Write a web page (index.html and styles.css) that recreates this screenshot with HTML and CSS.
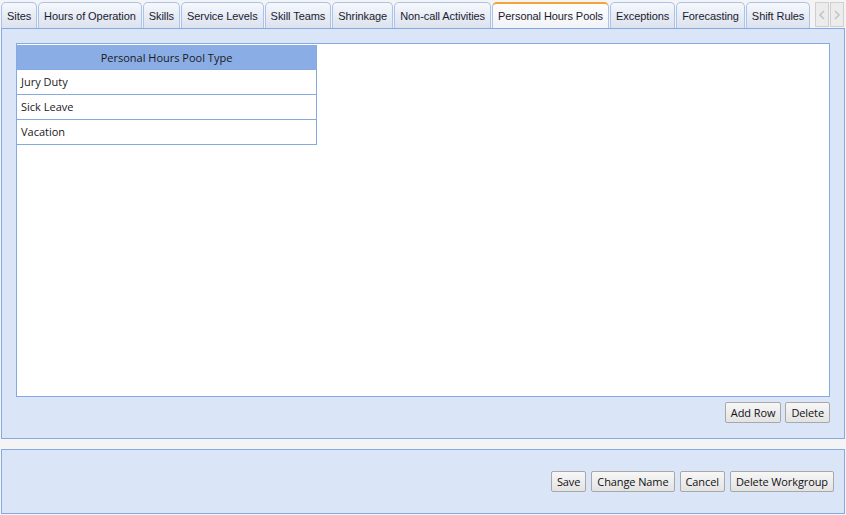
FILE: index.html
```html
<!DOCTYPE html>
<html lang="en">
<head>
  <meta charset="UTF-8" />
  <title>Workgroup Settings</title>
  <link rel="stylesheet" href="styles.css">
</head>
<body>

<div class="tab-strip">
  <div class="tabs">
    <div class="tab">Sites</div>
    <div class="tab">Hours of Operation</div>
    <div class="tab">Skills</div>
    <div class="tab">Service Levels</div>
    <div class="tab">Skill Teams</div>
    <div class="tab">Shrinkage</div>
    <div class="tab">Non-call Activities</div>
    <div class="tab active">Personal Hours Pools</div>
    <div class="tab">Exceptions</div>
    <div class="tab">Forecasting</div>
    <div class="tab">Shift Rules</div>
  </div>
  <div class="scroll-btns">
    <div class="scroll-btn">
      <svg width="8" height="10" viewBox="0 0 8 10"><path d="M6 1 L2 5 L6 9" fill="none" stroke="#c4c4c4" stroke-width="1.6"/></svg>
    </div>
    <div class="scroll-btn">
      <svg width="8" height="10" viewBox="0 0 8 10"><path d="M2 1 L6 5 L2 9" fill="none" stroke="#c4c4c4" stroke-width="1.6"/></svg>
    </div>
  </div>
</div>

<div class="panel tab-panel">
  <div class="grid-box">
    <table class="grid">
      <thead>
        <tr><th>Personal Hours Pool Type</th></tr>
      </thead>
      <tbody>
        <tr><td>Jury Duty</td></tr>
        <tr><td>Sick Leave</td></tr>
        <tr><td>Vacation</td></tr>
      </tbody>
    </table>
  </div>
  <div class="actions">
    <button class="btn">Add Row</button>
    <button class="btn">Delete</button>
  </div>
</div>

<div class="panel footer-panel">
  <button class="btn">Save</button>
  <button class="btn">Change Name</button>
  <button class="btn">Cancel</button>
  <button class="btn">Delete Workgroup</button>
</div>

</body>
</html>
```

FILE: styles.css
```css
body {
  margin: 0;
  padding: 1px 1px 0 1px;
  background-color: #f4f4f4;
  font-family: "Liberation Sans", Arial, sans-serif;
  font-size: 11px;
  color: #1a1a1a;
  width: 844px;
}

.tab-strip {
  display: flex;
  align-items: flex-end;
  height: 27px;
}

.tabs {
  display: flex;
  gap: 1px;
  align-items: flex-end;
  flex-shrink: 0;
}

.tab {
  height: 25px;
  line-height: 26px;
  padding: 0 5px;
  border: 1px solid #a9c3ea;
  border-bottom: none;
  border-radius: 5px 5px 0 0;
  background: linear-gradient(#f6f8fc, #e6ebf4 55%, #dde3ee);
  color: #1b1b2e;
  letter-spacing: -0.07px;
  white-space: nowrap;
  flex-shrink: 0;
}

.tab.active {
  background: linear-gradient(#fdfdfe, #f1f3f8);
  border-top: 2px solid #f3a43a;
  height: 24px;
  line-height: 25px;
}

.scroll-btns {
  display: flex;
  gap: 1px;
  margin-left: auto;
  margin-right: 1px;
  margin-bottom: 1px;
  flex-shrink: 0;
}

.scroll-btn {
  width: 12px;
  height: 23px;
  border: 1px solid #cfcfcf;
  background: #ececec;
  display: flex;
  align-items: center;
  justify-content: center;
}

.panel {
  border: 1px solid #86aadf;
  background-color: #dae5f8;
}

.tab-panel {
  padding: 14px;
  height: 381px;
}

.grid-box {
  height: 351px;
  background: #ffffff;
  border: 1px solid #86aadf;
  padding: 1px 0 0 0;
}

.grid {
  border-collapse: collapse;
  width: 300px;
  font-family: "Open Sans", "DejaVu Sans", sans-serif;
  font-size: 11px;
}

.grid th {
  background-color: #8bade6;
  font-weight: normal;
  height: 24px;
  padding: 0;
  border-right: 1px solid #86aadf;
  border-bottom: 1px solid #86aadf;
}

.grid td {
  height: 23px;
  padding: 0 0 1px 4px;
  border-right: 1px solid #86aadf;
  border-bottom: 1px solid #86aadf;
}

.actions {
  display: flex;
  justify-content: flex-end;
  gap: 4px;
  margin-top: 5px;
}

.btn {
  height: 21px;
  padding: 0 5px;
  font-family: "Open Sans", "DejaVu Sans", sans-serif;
  font-size: 11px;
  letter-spacing: -0.1px;
  color: #111;
  border: 1px solid #a8a8a8;
  border-radius: 2px;
  background: linear-gradient(#f7f7f7, #e3e3e3);
}

.footer-panel {
  margin-top: 10px;
  height: 63px;
  display: flex;
  justify-content: flex-end;
  align-items: center;
  gap: 5px;
  padding-right: 10px;
}
```
